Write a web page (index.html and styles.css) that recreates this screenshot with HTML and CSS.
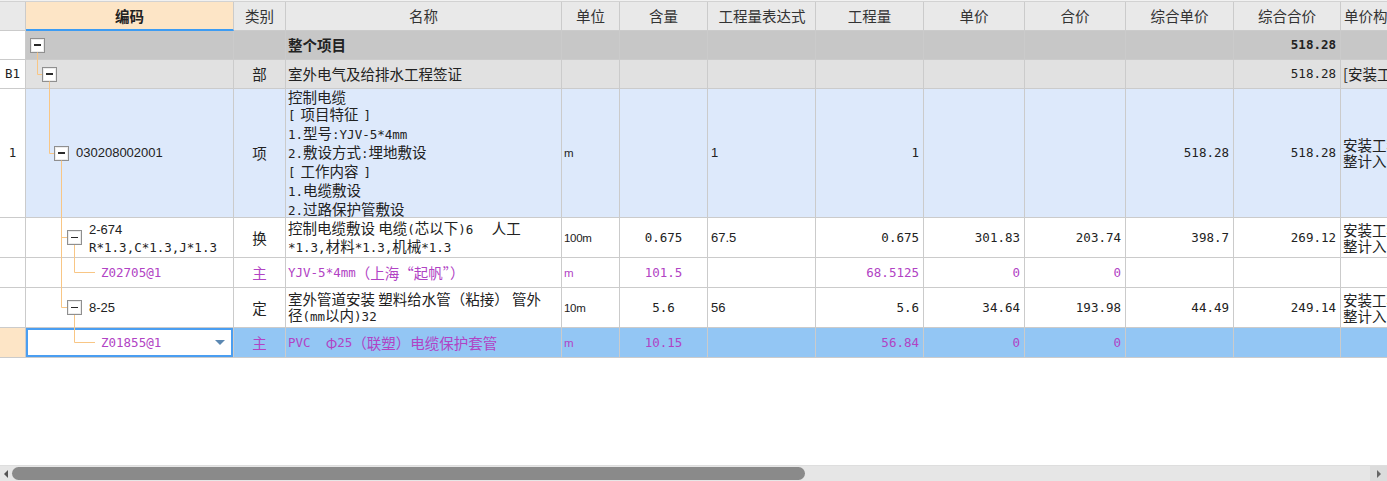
FILE: index.html
```html
<!DOCTYPE html>
<html lang="zh-CN">
<head>
<meta charset="utf-8">
<title>分部分项</title>
<link rel="stylesheet" href="styles.css">
</head>
<body>
<div class="app">
  <div class="grid">
    <div class="topline"></div>
    <div class="row hdr">
      <div class="c w0"></div>
      <div class="c w1 hsel"><b>编码</b></div>
      <div class="c w2">类别</div>
      <div class="c w3">名称</div>
      <div class="c w4">单位</div>
      <div class="c w5">含量</div>
      <div class="c w6">工程量表达式</div>
      <div class="c w7">工程量</div>
      <div class="c w8">单价</div>
      <div class="c w9">合价</div>
      <div class="c w10">综合单价</div>
      <div class="c w11">综合合价</div>
      <div class="c w12">单价构成文件</div>
    </div>

    <div class="row rt h29">
      <div class="c w0 rn"></div>
      <div class="c w1 code lv0"><span class="tg"></span></div>
      <div class="c w2 ctr"></div>
      <div class="c w3 b">整个项目</div>
      <div class="c w4"></div>
      <div class="c w5"></div>
      <div class="c w6"></div>
      <div class="c w7"></div>
      <div class="c w8"></div>
      <div class="c w9"></div>
      <div class="c w10"></div>
      <div class="c w11 r n b">518.28</div>
      <div class="c w12"></div>
    </div>

    <div class="row rb h29">
      <div class="c w0 rn n">B1</div>
      <div class="c w1 code lv1"><span class="tg"></span></div>
      <div class="c w2 ctr">部</div>
      <div class="c w3">室外电气及给排水工程签证</div>
      <div class="c w4"></div>
      <div class="c w5"></div>
      <div class="c w6"></div>
      <div class="c w7"></div>
      <div class="c w8"></div>
      <div class="c w9"></div>
      <div class="c w10"></div>
      <div class="c w11 r n">518.28</div>
      <div class="c w12">[安装工程]</div>
    </div>

    <div class="row rq h129">
      <div class="c w0 rn n">1</div>
      <div class="c w1 code lv2"><span class="tg"></span><span class="s">030208002001</span></div>
      <div class="c w2 ctr">项</div>
      <div class="c w3"><div class="ml ml17">控制电缆<br><span class="n bl">[</span>项目特征<span class="n br">]</span><br><span class="n">1.</span>型号<span class="n">:YJV-5*4mm</span><br><span class="n">2.</span>敷设方式<span class="n">:</span>埋地敷设<br><span class="n bl">[</span>工作内容<span class="n br">]</span><br><span class="n">1.</span>电缆敷设<br><span class="n">2.</span>过路保护管敷设</div></div>
      <div class="c w4"><span class="u">m</span></div>
      <div class="c w5"></div>
      <div class="c w6"><span class="s">1</span></div>
      <div class="c w7 r n">1</div>
      <div class="c w8"></div>
      <div class="c w9"></div>
      <div class="c w10 r n">518.28</div>
      <div class="c w11 r n">518.28</div>
      <div class="c w12"><div class="ml">安装工程<br>整计入费用</div></div>
    </div>

    <div class="row h40">
      <div class="c w0 rn"></div>
      <div class="c w1 code lv3"><span class="tg"></span><div class="ml"><span class="s">2-674</span><br><span class="n">R*1.3,C*1.3,J*1.3</span></div></div>
      <div class="c w2 ctr">换</div>
      <div class="c w3"><div class="ml">控制电缆敷设 电缆<span class="n">(</span>芯以下<span class="n">)6&nbsp;&nbsp;</span> 人工<br><span class="n">*1.3,</span>材料<span class="n">*1.3,</span>机械<span class="n">*1.3</span></div></div>
      <div class="c w4"><span class="u">100m</span></div>
      <div class="c w5 ctr n">0.675</div>
      <div class="c w6"><span class="s">67.5</span></div>
      <div class="c w7 r n">0.675</div>
      <div class="c w8 r n">301.83</div>
      <div class="c w9 r n">203.74</div>
      <div class="c w10 r n">398.7</div>
      <div class="c w11 r n">269.12</div>
      <div class="c w12"><div class="ml">安装工程<br>整计入费用</div></div>
    </div>

    <div class="row h30 p">
      <div class="c w0 rn"></div>
      <div class="c w1 code leaf"><span class="n">Z02705@1</span></div>
      <div class="c w2 ctr">主</div>
      <div class="c w3"><span class="n">YJV-5*4mm</span>（上海“起帆”）</div>
      <div class="c w4"><span class="u">m</span></div>
      <div class="c w5 ctr n">101.5</div>
      <div class="c w6"></div>
      <div class="c w7 r n">68.5125</div>
      <div class="c w8 r n">0</div>
      <div class="c w9 r n">0</div>
      <div class="c w10"></div>
      <div class="c w11"></div>
      <div class="c w12"></div>
    </div>

    <div class="row h40">
      <div class="c w0 rn"></div>
      <div class="c w1 code lv3"><span class="tg"></span><span class="s">8-25</span></div>
      <div class="c w2 ctr">定</div>
      <div class="c w3"><div class="ml">室外管道安装 塑料给水管（粘接） 管外<br>径<span class="n">(mm</span>以内<span class="n">)32</span></div></div>
      <div class="c w4"><span class="u">10m</span></div>
      <div class="c w5 ctr n">5.6</div>
      <div class="c w6"><span class="s">56</span></div>
      <div class="c w7 r n">5.6</div>
      <div class="c w8 r n">34.64</div>
      <div class="c w9 r n">193.98</div>
      <div class="c w10 r n">44.49</div>
      <div class="c w11 r n">249.14</div>
      <div class="c w12"><div class="ml">安装工程<br>整计入费用</div></div>
    </div>

    <div class="row rs h30 p">
      <div class="c w0 rn cur"></div>
      <div class="c w1 code leaf edit"><span class="n">Z01855@1</span><span class="dd"></span></div>
      <div class="c w2 ctr">主</div>
      <div class="c w3"><span class="n">PVC&nbsp;&nbsp;</span>Φ<span class="n">25</span>（联塑）电缆保护套管</div>
      <div class="c w4"><span class="u">m</span></div>
      <div class="c w5 ctr n">10.15</div>
      <div class="c w6"></div>
      <div class="c w7 r n">56.84</div>
      <div class="c w8 r n">0</div>
      <div class="c w9 r n">0</div>
      <div class="c w10"></div>
      <div class="c w11"></div>
      <div class="c w12"></div>
    </div>

    <svg class="tree" width="240" height="360" viewBox="0 0 240 360" aria-hidden="true">
      <path d="M37.5 52.5 V74.5 H42 M49.5 81.5 V153.5 H54 M61.5 160.5 V307.5 H67 M61.5 237.5 H67 M74.5 245 V272.5 H95 M74.5 315 V342.5 H95" fill="none" stroke="#f8c685" stroke-width="1"/>
    </svg>
  </div>

  <div class="hscroll">
    <div class="sb-btn"><span class="tri-l"></span></div>
    <div class="thumb"></div>
    <div class="sb-fill"></div>
    <div class="sb-btn sb-right"><span class="tri-r"></span></div>
  </div>
</div>
</body>
</html>
```

FILE: styles.css
```css
html, body {
  margin: 0;
  padding: 0;
  background: #fff;
}

body {
  font-family: "Noto Sans CJK SC", "Noto Sans", sans-serif;
  font-size: 14.5px;
  color: #222;
}

.app {
  width: 1387px;
  height: 481px;
  display: flex;
  flex-direction: column;
  overflow: hidden;
}

.grid {
  position: relative;
  flex: 1;
  overflow: hidden;
  background: #fff;
}

.topline {
  height: 1px;
  width: 1435px;
  background: #f1f1f1;
}

.row {
  display: flex;
  width: 1435px;
}

.hdr {
  height: 30px;
  box-sizing: border-box;
  border-top: 1px solid #d2d2d2;
  background: #e9e9e9;
  color: #333;
}

.hdr .c {
  justify-content: center;
  background: #e9e9e9;
}

.hdr .hsel {
  background: #fde5c6;
  border-bottom: 2px solid #3d9cf3;
}

.hdr .hsel b {
  font-weight: 700;
  color: #222;
}

.h29 { height: 29px; }
.h30 { height: 30px; }
.h40 { height: 40px; }
.h129 { height: 129px; }

.c {
  box-sizing: border-box;
  flex: none;
  display: flex;
  align-items: center;
  padding: 0 2px;
  border-right: 1px solid #cbcbcb;
  border-bottom: 1px solid #cbcbcb;
  white-space: nowrap;
  overflow: hidden;
  line-height: 16px;
}

.w0 { width: 26px; }
.w1 { width: 208px; }
.w2 { width: 52px; }
.w3 { width: 276px; }
.w4 { width: 58px; }
.w5 { width: 88px; }
.w6 { width: 108px; }
.w7 { width: 108px; }
.w8 { width: 101px; }
.w9 { width: 101px; }
.w10 { width: 108px; }
.w11 { width: 107px; }
.w12 { width: 94px; }

.w6 { padding-left: 3px; }

.r {
  justify-content: flex-end;
  padding-right: 4px;
}

.ctr {
  justify-content: center;
}

.b {
  font-weight: 700;
}

.rn {
  justify-content: center;
  background: #fff;
  padding: 0;
}

.rn.cur {
  background: #fde5c6;
}

/* row backgrounds */
.rt .c { background: #c7c7c7; }
.rb .c { background: #e1e1e1; }
.rq .c { background: #dde9fb; }
.rs .c { background: #93c6f4; }
.rt .rn, .rb .rn, .rq .rn { background: #fff; }
.rs .rn.cur { background: #fde5c6; }

/* fonts */
.n {
  font-family: "DejaVu Sans Mono", "Liberation Mono", monospace;
  font-size: 12.5px;
}

.bl {
  padding-right: 5px;
}

.br {
  padding-left: 5px;
}

.s {
  font-family: "Liberation Sans", Arial, sans-serif;
  font-size: 13px;
}

.u {
  font-family: "Liberation Sans", Arial, sans-serif;
  font-size: 11.5px;
  letter-spacing: -0.3px;
}

.ml {
  line-height: 16px;
}

.ml17 {
  line-height: 17px;
}

.p, .p .c {
  color: #b143c4;
}

/* tree column */
.code.lv0 { padding-left: 4px; }
.code.lv1 { padding-left: 16px; }
.code.lv2 { padding-left: 28px; }
.code.lv3 { padding-left: 41px; }
.code.leaf { padding-left: 75px; }

.tg {
  position: relative;
  flex: none;
  width: 15px;
  height: 15px;
  box-sizing: border-box;
  border: 1px solid #8f8f8f;
  background: #fff;
  box-shadow: inset 0 0 0 1px #ececec;
  margin-right: 7px;
}

.tg::after {
  content: "";
  position: absolute;
  left: 3px;
  top: 5.5px;
  width: 7px;
  height: 1.6px;
  background: #2a2a2a;
}

.rs .edit {
  background: #fff;
  box-shadow: inset 0 0 0 2px #4a9ef1;
}

.dd {
  margin-left: auto;
  margin-right: 6px;
  width: 0;
  height: 0;
  border-left: 5px solid transparent;
  border-right: 5px solid transparent;
  border-top: 5px solid #5b88b2;
}

.tree {
  position: absolute;
  left: 0;
  top: 0;
  pointer-events: none;
}

/* horizontal scrollbar */
.hscroll {
  flex: none;
  height: 16px;
  display: flex;
  align-items: center;
  background: #e6e6e6;
  border-top: 1px solid #dedede;
  box-sizing: border-box;
}

.sb-btn {
  flex: none;
  width: 12px;
  height: 100%;
  display: flex;
  align-items: center;
  justify-content: center;
}

.sb-right {
  width: 17px;
  background: #dcdcdc;
}

.tri-l {
  width: 0;
  height: 0;
  border-top: 4px solid transparent;
  border-bottom: 4px solid transparent;
  border-right: 4px solid #555;
}

.tri-r {
  width: 0;
  height: 0;
  border-top: 4px solid transparent;
  border-bottom: 4px solid transparent;
  border-left: 4px solid #666;
}

.thumb {
  flex: none;
  width: 793px;
  height: 13px;
  background: #8a8a8a;
  border-radius: 7px;
}

.sb-fill {
  flex: 1;
}
```
